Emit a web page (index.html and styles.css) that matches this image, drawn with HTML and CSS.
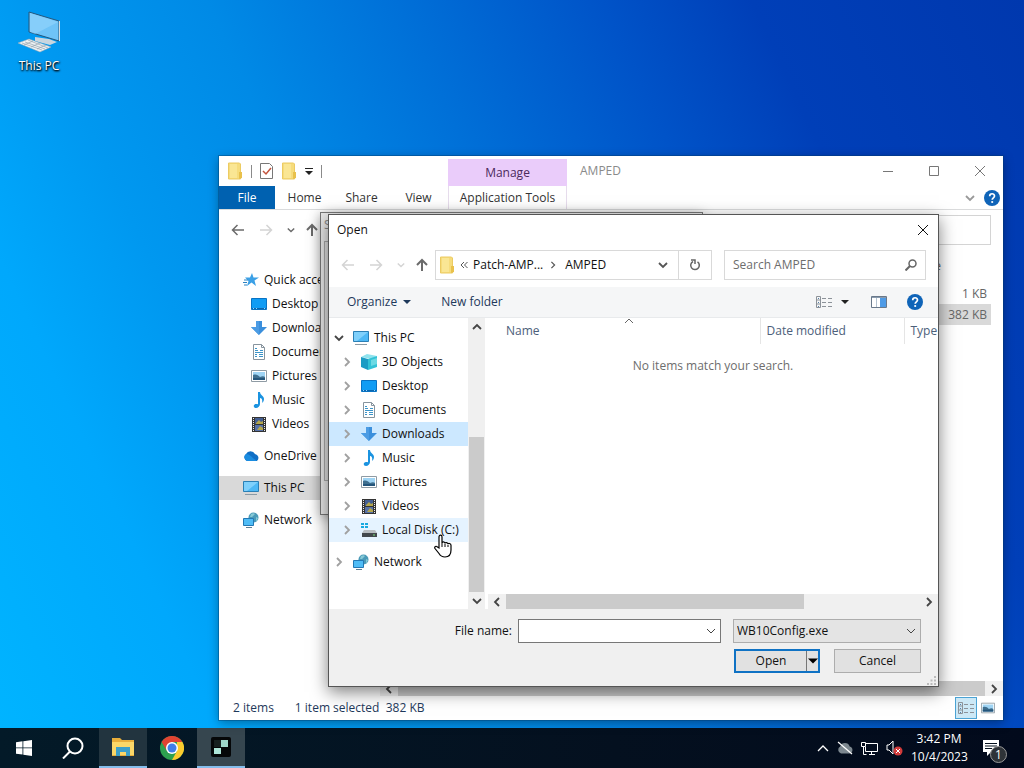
FILE: index.html
```html
<!DOCTYPE html>
<html lang="en">
<head>
    <meta charset="UTF-8">
    <meta name="viewport" content="width=device-width, initial-scale=1.0">
    <title>Desktop</title>
    <link rel="stylesheet" href="styles.css">
</head>
<body>

    <!-- icon set -->
    <svg class="sprite" aria-hidden="true">
        <symbol id="i-folder" viewBox="0 0 16 18">
            <path d="M1.500 1h11l1 1v15h-12z" fill="#f6dc7c" stroke="#eccb62" />
            <path d="M12 10h3v6l-3 1z" fill="#e9c14c" />
            <path d="M3 2h7v14H3z" fill="#fae694" />
        </symbol>
        <symbol id="i-pc" viewBox="0 0 16 16">
            <path d="M.5 1.500h15v10H.5z" fill="#4db8f5" stroke="#2a7fb5" />
            <path d="M1 2h14L4 11H1z" fill="#7fd0fb" />
            <path d="M2 14.500h12" stroke="#8a9aa5" />
        </symbol>
        <symbol id="i-desktop" viewBox="0 0 16 16">
            <path d="M.5 2.500h15v11H.5z" fill="#109cf4" stroke="#0873c4" />
            <path d="M1 12.500h14" stroke="#0a65ad" />
            <path d="M2 12.500h1m2 0h1m7 0h1" stroke="#9ad8ff" />
        </symbol>
        <symbol id="i-down" viewBox="0 0 16 16">
            <path d="M5 1h6v6h5l-8 8-8-8h5z" fill="#3b8fdc" />
            <path d="M5 1h3v14L0 7h5z" fill="#4c9ce4" />
        </symbol>
        <symbol id="i-doc" viewBox="0 0 16 16">
            <path d="M2.500.5h8l3 3v12h-11z" fill="#fff" stroke="#87949e" />
            <path d="M10.500.5v3h3" fill="none" stroke="#87949e" />
            <path d="M4 4.500h2M4 6.500h3M9 6.500h3M4 8.500h8M4 10.500h2M8 10.500h4M4 12.500h2M8 12.500h4" stroke="#3b94c9" />
        </symbol>
        <symbol id="i-pic" viewBox="0 0 16 16">
            <path d="M.5 2.500h15v11H.5z" fill="#fff" stroke="#8f9ba4" />
            <path d="M2 4h12v8H2z" fill="#9fd4f4" />
            <path d="M2 7c3-1 5 0 7 2 2-1 4-1 5 0v3H2z" fill="#3f6f8f" />
            <path d="M2 10h12v2H2z" fill="#24557b" />
        </symbol>
        <symbol id="i-music" viewBox="0 0 16 16">
            <path d="M7 0h2c0 3 4 4 4 7 0 2-1 3-2 4 1-4-1-5-2-5v6c0 2-2 4-4 4-3 0-3-4 0-4 1 0 2 0 2 .5z" fill="#1b93e0" />
        </symbol>
        <symbol id="i-video" viewBox="0 0 16 16">
            <path d="M1 1h14v15H1z" fill="#343434" />
            <path d="M4 2h8v6H4z" fill="#435e93" />
            <path d="M4 9h8v6H4z" fill="#5671a8" />
            <path d="M5 7l3-3 2 2 2-1v3H5zM6 14l3-4 3 2v2z" fill="#b4a64c" />
            <path d="M2.500 2v14M13.500 2v14" stroke="#eee" stroke-dasharray="1 1" />
        </symbol>
        <symbol id="i-cube" viewBox="0 0 16 16">
            <path d="M0 3l6-3 10 2-6 3z" fill="#8fe3ee" />
            <path d="M0 3l7 2v11l-7-3z" fill="#1b9cc4" />
            <path d="M7 5l9-3v11l-9 3z" fill="#33c2d6" />
            <path d="M10 6l6-2v6l-6 2z" fill="#6cd9e3" />
        </symbol>
        <symbol id="i-disk" viewBox="0 0 16 16">
            <path d="M0 1h3v2H0zM4 1h3v2H4zM0 4h3v2H0zM4 4h3v2H4z" fill="#17a9e0" />
            <path d="M3 8h11l2 3H1z" fill="#b9bec2" />
            <path d="M1 11h15v4H1z" fill="#43484c" />
            <path d="M12 13h2" stroke="#7be07b" />
        </symbol>
        <symbol id="i-network" viewBox="0 0 16 16">
            <circle cx="10.500" cy="5.500" r="5" fill="#4a9ab8" />
            <path d="M8 2c2-1 3-1 4 0l-3 3H7zM13 5l2 1-2 4z" fill="#86c9d6" />
            <path d="M.5 6.500h10v7H.5z" fill="#4fbcf6" stroke="#2378b4" />
            <path d="M3 15.500h6" stroke="#5d7f95" />
        </symbol>
        <symbol id="i-star" viewBox="0 0 16 16">
            <path d="M9 1l1.500 4.500H16l-4.500 3L13 14l-4.500-3.500L4 14l1.500-5L2 5.500h5z" fill="#3ba0e6" />
            <path d="M1 8h4M0 10.500h4M1 13h3" stroke="#2b82c2" />
        </symbol>
        <symbol id="i-cloud" viewBox="0 0 16 16">
            <path d="M4 13a4 4 0 0 1-1-7 5 5 0 0 1 9 0 4 4 0 0 1 2 7z" fill="#0f6fc6" />
            <path d="M4 13a4 4 0 0 1-1-7c4 0 6 4 11 7z" fill="#1a8ce0" />
        </symbol>
        <symbol id="i-left" viewBox="0 0 14 12">
            <path d="M13 6H2M6.500 1L1.500 6l5 5" fill="none" stroke="currentColor" stroke-width="1.500" />
        </symbol>
        <symbol id="i-right" viewBox="0 0 14 12">
            <path d="M1 6h11M7.500 1l5 5-5 5" fill="none" stroke="currentColor" stroke-width="1.500" />
        </symbol>
        <symbol id="i-up" viewBox="0 0 14 14">
            <path d="M7 13V2M2 7l5-5 5 5" fill="none" stroke="currentColor" stroke-width="2" />
        </symbol>
        <symbol id="i-chev" viewBox="0 0 10 10">
            <path d="M1 3l4 4 4-4" fill="none" stroke="currentColor" stroke-width="1.800" />
        </symbol>
        <symbol id="i-caret" viewBox="0 0 8 8">
            <path d="M0 2h8L4 6z" fill="currentColor" />
        </symbol>
        <symbol id="i-close" viewBox="0 0 12 12">
            <path d="M1 1l10 10M11 1L1 11" stroke="currentColor" />
        </symbol>
        <symbol id="i-list" viewBox="0 0 18 14">
            <path d="M1.500 1.500h4v11h-4zM1.500 5h4M1.500 9h4" fill="none" stroke="#8c9299" />
            <path d="M3 3.500h1M3 7.500h1M3 11.500h1" stroke="#5580a8" />
            <path d="M7 3.500h4M13 3.500h4M7 7.500h4M13 7.500h4M7 11.500h4M13 11.500h4" stroke="#8c9299" />
        </symbol>
        <symbol id="i-help" viewBox="0 0 16 16">
            <circle cx="8" cy="8" r="8" fill="#0f64b8" />
            <path d="M5.700 6.200C5.700 3 10.500 3 10.500 6c0 1.800-2.300 1.800-2.300 3.700" fill="none" stroke="#fff" stroke-width="1.700" />
            <circle cx="8.200" cy="12" r="1.100" fill="#fff" />
        </symbol>
    </svg>

    <main class="desktop">

        <button class="shortcut">
            <svg width="44" height="42" viewBox="0 0 44 42" aria-hidden="true">
                <path d="M18 26l14 2 8 3-7 3-15-4z" fill="#c9d6df" />
                <path d="M12 1l30 9v20l-30-9z" fill="#6fc3f7" stroke="#24577d" />
                <path d="M13 2l28 9-23 12-5-2z" fill="#96d5fb" opacity=".6" />
                <path d="M42.500 10v20" stroke="#d7dde0" />
                <path d="M1 32l11-4 22 8-11 5z" fill="#eef1f3" stroke="#98a7b1" stroke-width=".5" />
                <path d="M5 32l20 7M8 31l20 7M11 29l20 8M7 34l9-4M14 36l9-4M20 38l9-4" stroke="#96a5af" stroke-width=".7" />
            </svg>
            <span>This PC</span>
        </button>

        <section class="window explorer" aria-label="AMPED">
            <header class="ex-title">
                <div class="quick">
                    <svg width="16" height="18"><use href="#i-folder" /></svg>
                    <i class="sep"></i>
                    <svg width="13" height="16" viewBox="0 0 13 16"><path d="M.5.5h9l3 3v12H.5z" fill="#fff" stroke="#777" /><path d="M3 8l3 3 5-6" fill="none" stroke="#c2543e" stroke-width="1.500" /></svg>
                    <svg width="16" height="18"><use href="#i-folder" /></svg>
                    <svg width="8" height="8" viewBox="0 0 8 8"><path d="M0 1.500h8" stroke="#222" /><path d="M0 4h8L4 8z" fill="#222" /></svg>
                    <i class="sep"></i>
                </div>
                <div class="manage">Manage</div>
                <h1>AMPED</h1>
                <div class="caption">
                    <button aria-label="Minimize"><svg width="12" height="12" viewBox="0 0 12 12"><path d="M1 6.500h10" stroke="currentColor" /></svg></button>
                    <button aria-label="Maximize"><svg width="12" height="12" viewBox="0 0 12 12"><path d="M1.500 1.500h9v9h-9z" fill="none" stroke="currentColor" /></svg></button>
                    <button aria-label="Close"><svg width="12" height="12"><use href="#i-close" /></svg></button>
                </div>
            </header>
            <nav class="ribbon">
                <button class="file">File</button>
                <button>Home</button>
                <button>Share</button>
                <button>View</button>
                <button class="tools">Application Tools</button>
                <span class="ribbon-end">
                    <svg width="10" height="10"><use href="#i-chev" /></svg>
                    <svg class="help" width="16" height="16"><use href="#i-help" /></svg>
                </span>
            </nav>
            <div class="ex-nav">
                <button aria-label="Back"><svg width="14" height="12"><use href="#i-left" /></svg></button>
                <button class="off" aria-label="Forward"><svg width="14" height="12"><use href="#i-right" /></svg></button>
                <button aria-label="Recent"><svg width="8" height="8"><use href="#i-chev" /></svg></button>
                <button class="up" aria-label="Up"><svg width="14" height="14"><use href="#i-up" /></svg></button>
                <input class="ex-search" type="text" aria-label="Search">
            </div>
            <div class="ex-body">
                <ul class="tree">
                    <li><svg><use href="#i-star" /></svg>Quick access</li>
                    <li class="child"><svg><use href="#i-desktop" /></svg>Desktop</li>
                    <li class="child"><svg><use href="#i-down" /></svg>Downloads</li>
                    <li class="child"><svg><use href="#i-doc" /></svg>Documents</li>
                    <li class="child"><svg><use href="#i-pic" /></svg>Pictures</li>
                    <li class="child"><svg><use href="#i-music" /></svg>Music</li>
                    <li class="child"><svg><use href="#i-video" /></svg>Videos</li>
                    <li class="group"><svg><use href="#i-cloud" /></svg>OneDrive</li>
                    <li class="group current"><svg><use href="#i-pc" /></svg>This PC</li>
                    <li class="group"><svg><use href="#i-network" /></svg>Network</li>
                </ul>
                <div class="ex-files">
                    <table>
                        <thead><tr><th>Size</th></tr></thead>
                        <tbody>
                            <tr><td>1 KB</td></tr>
                            <tr class="picked"><td>382 KB</td></tr>
                        </tbody>
                    </table>
                    <div class="hscroll">
                        <svg class="to-left" width="10" height="10"><use href="#i-chev" /></svg>
                        <i class="thumb"></i>
                        <svg class="to-right" width="10" height="10"><use href="#i-chev" /></svg>
                    </div>
                </div>
            </div>
            <footer class="status">
                <span>2 items</span>
                <span>1 item selected&nbsp; 382 KB</span>
                <button class="view on" aria-label="Details"><svg width="18" height="14"><use href="#i-list" /></svg></button>
                <button class="view" aria-label="Thumbnails"><svg width="14" height="14"><use href="#i-pic" /></svg></button>
            </footer>
        </section>

        <section class="window behind" aria-label="Setup">
            <p>S</p>
            <div class="behind-box"></div>
        </section>

        <section class="window dialog" role="dialog" aria-label="Open">
            <header class="dlg-title">
                <h2>Open</h2>
                <button aria-label="Close"><svg width="12" height="12"><use href="#i-close" /></svg></button>
            </header>
            <div class="dlg-nav">
                <div class="arrows">
                    <button class="off" aria-label="Back"><svg width="14" height="12"><use href="#i-left" /></svg></button>
                    <button class="off" aria-label="Forward"><svg width="14" height="12"><use href="#i-right" /></svg></button>
                    <button class="off" aria-label="Recent"><svg width="8" height="8"><use href="#i-chev" /></svg></button>
                    <button class="up" aria-label="Up"><svg width="14" height="14"><use href="#i-up" /></svg></button>
                </div>
                <div class="address">
                    <svg width="16" height="18"><use href="#i-folder" /></svg>
                    <svg class="more" width="8" height="8" viewBox="0 0 8 8"><path d="M4 1L1 4l3 3M7.500 1l-3 3 3 3" fill="none" stroke="#555" /></svg>
                    <button>Patch-AMP...</button>
                    <svg class="crumb to-right" width="8" height="8" viewBox="0 0 10 10"><path d="M1 3l4 4 4-4" fill="none" stroke="#555" stroke-width="1.500" /></svg>
                    <button>AMPED</button>
                    <button class="drop" aria-label="Previous locations"><svg width="10" height="10"><use href="#i-chev" /></svg></button>
                    <button class="refresh" aria-label="Refresh"><svg width="12" height="12" viewBox="0 0 12 12"><path d="M4 2.500a4.300 4.300 0 1 0 4.500.3" fill="none" stroke="#666" stroke-width="1.500" /><path d="M2 1h4v4" fill="none" stroke="#666" stroke-width="1.500" /></svg></button>
                </div>
                <label class="search">
                    <input type="text" placeholder="Search AMPED" aria-label="Search AMPED">
                    <svg width="12" height="12" viewBox="0 0 12 12"><circle cx="7.500" cy="4.500" r="3.500" fill="none" stroke="#666" stroke-width="1.500" /><path d="M5 7l-4.500 4.500" stroke="#666" stroke-width="2" /></svg>
                </label>
            </div>
            <div class="toolbar">
                <button>Organize <svg width="8" height="8"><use href="#i-caret" /></svg></button>
                <button>New folder</button>
                <div class="tools-right">
                    <svg width="18" height="14"><use href="#i-list" /></svg>
                    <svg width="8" height="8"><use href="#i-caret" /></svg>
                    <svg class="pane" width="16" height="12" viewBox="0 0 16 12"><path d="M.5.5h15v11H.5z" fill="#fff" stroke="#69788a" /><path d="M1 1.500h14" stroke="#8a9bad" /><path d="M5.500 2v9" stroke="#b4c2d0" /><path d="M9 2h6v9H9z" fill="#4f9be6" /></svg>
                    <svg width="16" height="16"><use href="#i-help" /></svg>
                </div>
            </div>
            <div class="dlg-body">
                <ul class="tree nested">
                    <li class="open"><svg class="tw"><use href="#i-chev" /></svg><svg><use href="#i-pc" /></svg>This PC</li>
                    <li class="child"><svg class="tw"><use href="#i-chev" /></svg><svg><use href="#i-cube" /></svg>3D Objects</li>
                    <li class="child"><svg class="tw"><use href="#i-chev" /></svg><svg><use href="#i-desktop" /></svg>Desktop</li>
                    <li class="child"><svg class="tw"><use href="#i-chev" /></svg><svg><use href="#i-doc" /></svg>Documents</li>
                    <li class="child chosen"><svg class="tw"><use href="#i-chev" /></svg><svg><use href="#i-down" /></svg>Downloads</li>
                    <li class="child"><svg class="tw"><use href="#i-chev" /></svg><svg><use href="#i-music" /></svg>Music</li>
                    <li class="child"><svg class="tw"><use href="#i-chev" /></svg><svg><use href="#i-pic" /></svg>Pictures</li>
                    <li class="child"><svg class="tw"><use href="#i-chev" /></svg><svg><use href="#i-video" /></svg>Videos</li>
                    <li class="child hover"><svg class="tw"><use href="#i-chev" /></svg><svg><use href="#i-disk" /></svg>Local Disk (C:)</li>
                    <li class="group"><svg class="tw"><use href="#i-chev" /></svg><svg><use href="#i-network" /></svg>Network</li>
                </ul>
                <div class="vscroll">
                    <svg class="to-up" width="10" height="10"><use href="#i-chev" /></svg>
                    <i class="track"></i>
                    <i class="thumb"></i>
                    <svg width="10" height="10"><use href="#i-chev" /></svg>
                </div>
                <div class="files">
                    <table>
                        <thead>
                            <tr>
                                <th class="name">Name<svg width="10" height="6" viewBox="0 0 10 6"><path d="M1 5l4-4 4 4" fill="none" stroke="#666" /></svg></th>
                                <th class="date">Date modified</th>
                                <th>Type</th>
                            </tr>
                        </thead>
                        <tbody><tr><td colspan="3">No items match your search.</td></tr></tbody>
                    </table>
                    <div class="hscroll">
                        <svg class="to-left" width="10" height="10"><use href="#i-chev" /></svg>
                        <i class="thumb"></i>
                        <i class="track"></i>
                        <svg class="to-right" width="10" height="10"><use href="#i-chev" /></svg>
                    </div>
                </div>
            </div>
            <form class="dlg-foot">
                <div class="line">
                    <label for="filename">File name:</label>
                    <span class="combo">
                        <input type="text" id="filename">
                        <svg width="10" height="10" viewBox="0 0 10 10"><path d="M1 3l4 4 4-4" fill="none" stroke="#444" /></svg>
                    </span>
                    <span class="picker">
                        <select aria-label="File type"><option>WB10Config.exe</option></select>
                        <svg width="10" height="10" viewBox="0 0 10 10"><path d="M1 3l4 4 4-4" fill="none" stroke="#444" /></svg>
                    </span>
                </div>
                <div class="line">
                    <span class="split">
                        <button type="button">Open</button>
                        <button type="button" class="arrow" aria-label="Open options"><svg width="10" height="10" viewBox="0 0 8 8"><path d="M0 2h8L4 6z" /></svg></button>
                    </span>
                    <button type="button" class="cancel">Cancel</button>
                </div>
                <svg class="grip" width="9" height="9" viewBox="0 0 9 9"><path d="M7 0h2v2H7zM7 3.500h2v2H7zM7 7h2v2H7zM3.500 3.500h2v2h-2zM3.500 7h2v2h-2zM0 7h2v2H0z" fill="#bbb" /></svg>
            </form>
        </section>

        <svg class="cursor" width="18" height="24" viewBox="0 0 18 24" aria-hidden="true">
            <path d="M5 14V3c0-2.500 3-2.500 3 0v6c0-1.500 3-1.500 3 .5 0-1.500 3-1 3 .7 0-1.200 3-1 3 1V16c0 4-2 7-6 7-3 0-4.500-1-6-3.500L1 14.500c-1-2 1-3 2.500-1.500z" fill="#fff" stroke="#000" stroke-width="1.200" />
            <path d="M8 9v4M11 10v3M14 11v2" stroke="#000" />
        </svg>
    </main>

    <footer class="taskbar">
        <button aria-label="Start"><svg width="16" height="16" viewBox="0 0 16 16"><path d="M0 2.300l6.500-1v6.200H0zM7.300 1.200L16 0v7.500H7.300zM0 8.300h6.500v6.300L0 13.700zM7.300 8.300H16V16l-8.700-1.300z" fill="#fff" /></svg></button>
        <button class="find" aria-label="Search"><svg width="22" height="22" viewBox="0 0 22 22"><circle cx="13" cy="9" r="7.500" fill="none" stroke="#fff" stroke-width="2" /><path d="M8 14.500L1 21.500" stroke="#fff" stroke-width="2" /></svg></button>
        <button class="active" aria-label="File Explorer"><svg width="22" height="18" viewBox="0 0 22 18"><path d="M0 0h8l2 2h12v16H0z" fill="#e9ae3b" /><path d="M0 4h22v13H0z" fill="#fbd768" /><path d="M4 9h14v9h-4v-4H8v4H4z" fill="#3c9fc9" /></svg></button>
        <button aria-label="Chrome"><svg width="24" height="24" viewBox="0 0 24 24"><circle cx="12" cy="12" r="12" fill="#2da14f" /><path d="M1.600 6A12 12 0 0 1 22.400 6H12L7 15z" fill="#df4332" /><path d="M22.400 6A12 12 0 0 1 12 24l5-9V6z" fill="#fccb2e" /><circle cx="12" cy="12" r="6" fill="#fff" /><circle cx="12" cy="12" r="4.500" fill="#3f7ee8" /></svg></button>
        <button class="active current-app" aria-label="AMPED"><svg width="20" height="20" viewBox="0 0 20 20"><rect width="20" height="20" rx="2" fill="#050708" /><path d="M10 3h7v7h-7z" fill="#9fd6c9" /><path d="M3 11h7v6H3z" fill="#aee5d8" /><path d="M3 3h7v7H3z" fill="#17201f" /></svg></button>
        <div class="tray">
            <svg width="12" height="8" viewBox="0 0 12 8"><path d="M1 7l5-5 5 5" fill="none" stroke="#fff" stroke-width="1.300" /></svg>
            <svg width="16" height="14" viewBox="0 0 16 14"><path d="M4 12.500a3.800 3.800 0 0 1-.8-7 5 5 0 0 1 9.500 0 3.600 3.600 0 0 1 0 7z" fill="#7c878f" /><path d="M1 1l14 12" stroke="#fff" stroke-width="1.200" /></svg>
            <svg width="17" height="15" viewBox="0 0 17 15"><path d="M5 2.500h11.500v8H4.500V6M8 13.500h6M10.500 10.500v3M2.500 6v7.500h3" fill="none" stroke="#fff" /><path d="M.5 1.500h4v4h-4z" fill="none" stroke="#fff" /></svg>
            <svg width="17" height="16" viewBox="0 0 17 16"><path d="M1 5h2l4-4v13l-4-4H1z" fill="none" stroke="#fff" /><circle cx="12" cy="11" r="4.500" fill="#d23b3b" /><path d="M10 9l4 4M14 9l-4 4" stroke="#fff" /></svg>
            <time class="clock"><span>3:42 PM</span><span>10/4/2023</span></time>
            <button class="notes" aria-label="Notifications">
                <svg width="16" height="16" viewBox="0 0 16 16"><path d="M0 0h16v12H8l-4 4v-4H0z" fill="#fff" /><path d="M2 3.500h12M2 6h12M2 8.500h7" stroke="#06121f" /></svg>
                <span class="badge">1</span>
            </button>
        </div>
    </footer>

</body>
</html>
```
FILE: styles.css
```css
* {
    box-sizing: border-box;
}
body {
    margin: 0;
    height: 100vh;
    display: flex;
    flex-direction: column;
    overflow: hidden;
    font-family: "Open Sans", "Noto Sans", sans-serif;
    font-size: 12px;
    line-height: 16px;
    color: #111;
}
button, input, select {
    font: inherit;
    color: inherit;
    margin: 0;
    padding: 0;
    border: none;
    border-radius: 0;
    background: none;
    outline: none;
}
button {
    display: flex;
    align-items: center;
    justify-content: center;
}
h1, h2, p, ul {
    margin: 0;
    padding: 0;
    font-size: 12px;
    font-weight: normal;
    list-style: none;
}
svg {
    flex: none;
    display: block;
}
.sprite {
    position: absolute;
    width: 0;
    height: 0;
}
.to-left {
    transform: rotate(90deg);
}
.to-right {
    transform: rotate(-90deg);
}
.to-up {
    transform: rotate(180deg);
}

/* desktop */
.desktop {
    flex: 1;
    position: relative;
    background: linear-gradient(65deg, #00b4ff 0%, #00a8fc 16%, #0098f0 27%, #008ae6 40%, #0070d8 54%, #0053c8 69%, #003fb8 80%, #0038ae 100%);
}
.shortcut {
    position: absolute;
    left: 2px;
    top: 11px;
    width: 74px;
    flex-direction: column;
    gap: 5px;
    color: #fff;
    text-shadow: 0 1px 2px #000, 1px 1px 2px #000;
}
.window {
    position: absolute;
    display: flex;
    flex-direction: column;
    background: #fff;
}

/* explorer window */
.explorer {
    inset: 156px 21px 8px 219px;
    box-shadow: 0 0 0 1px rgba(0, 60, 110, 0.4), 0 3px 10px rgba(0, 0, 0, 0.35);
}
.ex-title {
    display: flex;
    height: 30px;
}
.quick {
    width: 229px;
    padding-left: 8px;
    display: flex;
    align-items: center;
    gap: 8px;
}
.sep {
    width: 1px;
    height: 13px;
    background: #8a8a8a;
}
.manage {
    width: 119px;
    margin-top: 3px;
    line-height: 27px;
    text-align: center;
    background: #eaccfa;
    color: #4b2a5c;
}
.ex-title h1 {
    padding-left: 13px;
    line-height: 30px;
    color: #8a8a8a;
}
.caption {
    margin-left: auto;
    display: flex;
    color: #777;
}
.caption button {
    width: 46px;
}
.ribbon {
    display: flex;
    height: 24px;
    border-bottom: 1px solid #dadbdc;
    color: #333;
}
.ribbon button {
    width: 57px;
}
.ribbon .file {
    width: 56px;
    background: #0061b0;
    color: #fff;
}
.ribbon .file + button {
    margin-left: 1px;
}
.ribbon .tools {
    width: 119px;
    margin-left: 1px;
    border: solid #e6dcec;
    border-width: 0 1px;
}
.ribbon-end {
    margin-left: auto;
    padding-right: 3px;
    display: flex;
    align-items: center;
    gap: 9px;
    color: #999;
}
.ex-nav {
    display: flex;
    align-items: center;
    gap: 14px;
    height: 40px;
    padding: 0 12px;
    color: #6b6b6b;
}
.off {
    color: #d4d4d4;
}
.up {
    margin-left: -4px;
}
.ex-search {
    margin-left: auto;
    height: 30px;
    width: 190px;
    border: 1px solid #d4d4d4;
}
.ex-body {
    flex: 1;
    display: flex;
    min-height: 0;
}
.tree {
    width: 161px;
    padding-top: 18px;
}
.tree li {
    display: flex;
    align-items: center;
    gap: 5px;
    height: 24px;
    padding-left: 24px;
    white-space: nowrap;
}
.tree li svg {
    width: 16px;
    height: 16px;
}
.tree .child {
    padding-left: 32px;
}
.tree .group {
    margin-top: 8px;
}
.tree .current {
    background: #d9d9d9;
}
.ex-files {
    flex: 1;
    display: flex;
    flex-direction: column;
}
.ex-files table {
    margin-left: auto;
    margin-right: 12px;
    width: 80px;
    border-collapse: collapse;
    color: #666;
}
.ex-files th {
    height: 33px;
    padding: 0 0 2px 8px;
    text-align: left;
    font-weight: normal;
}
.ex-files td {
    height: 21px;
    padding: 0 4px;
    text-align: right;
}
.ex-files .picked {
    background: #d9d9d9;
}
.hscroll {
    margin-top: auto;
    height: 15px;
    display: flex;
    align-items: center;
    background: #f0f0f0;
    color: #444;
    padding: 0 4px;
    gap: 4px;
}
.hscroll .thumb {
    flex: 2;
    height: 15px;
    background: #cbcbcb;
}
.status {
    display: flex;
    align-items: center;
    height: 24px;
    padding: 0 4px 0 14px;
    color: #1e395b;
}
.status span {
    margin-right: 21px;
}
.view {
    width: 22px;
    height: 22px;
    border: 1px solid transparent;
}
.view.on {
    margin-left: auto;
    background: #cce8f6;
    border-color: #4ba3d4;
}

/* window between the two */
.behind {
    left: 320px;
    top: 212px;
    width: 383px;
    height: 303px;
    background: #e8e8e8;
    border: 1px solid #777;
    padding: 4px 3px;
    color: #888;
    box-shadow: 0 3px 12px rgba(0, 0, 0, 0.35);
}
.behind-box {
    margin-top: 8px;
    height: 240px;
    border: 1px solid #aaa;
    background: #e2e2e2;
}

/* open dialog */
.dialog {
    inset: 214px 85px 41px 328px;
    border: 1px solid #555;
    box-shadow: 0 5px 16px rgba(0, 0, 0, 0.5);
}
.dlg-title {
    display: flex;
    align-items: center;
    justify-content: space-between;
    height: 30px;
    padding: 0 9px 0 8px;
}
.dlg-nav {
    display: flex;
    align-items: center;
    height: 40px;
    padding: 0 12px;
    margin-bottom: 2px;
}
.arrows {
    width: 94px;
    display: flex;
    align-items: center;
    gap: 14px;
    color: #6b6b6b;
}
.address {
    flex: 1;
    display: flex;
    align-items: center;
    height: 30px;
    margin-right: 12px;
    padding-left: 3px;
    gap: 5px;
    border: 1px solid #d9d9d9;
}
.crumb {
    margin: 0 3px 0 1px;
}
.drop {
    width: 20px;
    margin-left: auto;
    color: #555;
}
.refresh {
    width: 33px;
    height: 28px;
    border-left: 1px solid #d9d9d9;
}
.search {
    width: 202px;
    height: 30px;
    display: flex;
    align-items: center;
    padding: 0 8px;
    border: 1px solid #d9d9d9;
}
.search input {
    flex: 1;
    min-width: 0;
}
.search input::placeholder {
    color: #6d6d6d;
    opacity: 1;
}
.toolbar {
    display: flex;
    align-items: center;
    height: 31px;
    padding: 0 15px 0 18px;
    gap: 30px;
    background: #f5f6f7;
    border-bottom: 1px solid #e8eaec;
    color: #1e395b;
}
.toolbar button {
    gap: 6px;
}
.tools-right {
    margin-left: auto;
    display: flex;
    align-items: center;
    gap: 8px;
    color: #222;
}
.tools-right .pane {
    margin: 0 12px 0 14px;
}
.dlg-body {
    flex: 1;
    min-height: 0;
    display: flex;
}
.nested {
    width: 139px;
    padding-top: 8px;
}
.nested li {
    padding-left: 5px;
}
.nested .child {
    padding-left: 13px;
}
.tree .tw {
    width: 10px;
    height: 10px;
    margin-right: 4px;
    transform: rotate(-90deg);
    color: #a0a0a0;
}
.nested .open .tw {
    transform: none;
    color: #444;
}
.nested .chosen {
    background: #cce8ff;
}
.nested .hover {
    background: #e5f3ff;
}
.vscroll {
    width: 17px;
    display: flex;
    flex-direction: column;
    align-items: center;
    padding: 4px 1px 3px;
    gap: 4px;
    background: #f0f0f0;
    color: #444;
}
.vscroll .track {
    flex: 5;
}
.vscroll .thumb {
    flex: 8;
    width: 15px;
    background: #cbcbcb;
}
.files {
    flex: 1;
    min-width: 0;
    margin-left: 3px;
    display: flex;
    flex-direction: column;
}
.files table {
    width: 100%;
    table-layout: fixed;
    border-collapse: collapse;
}
.files th {
    position: relative;
    height: 26px;
    padding: 0 6px;
    text-align: left;
    font-weight: normal;
    color: #4c607a;
    border-right: 1px solid #e5e5e5;
}
.files th:last-child {
    border: none;
}
.files .name {
    width: 272px;
    padding-left: 18px;
}
.files .date {
    width: 144px;
}
.files th svg {
    position: absolute;
    top: 0;
    left: 50%;
}
.files td {
    padding: 14px 0 0;
    text-align: center;
    color: #6d6d6d;
}
.files .track {
    flex: 3;
}
.files .hscroll .thumb {
    flex: 8;
}
.dlg-foot {
    position: relative;
    height: 77px;
    padding: 10px 17px 0 0;
    background: #f0f0f0;
    display: flex;
    flex-direction: column;
    gap: 6px;
}
.line {
    display: flex;
    justify-content: flex-end;
    align-items: center;
}
.combo, .picker {
    display: flex;
    align-items: center;
    height: 24px;
}
.combo {
    width: 203px;
    margin: 0 12px 0 6px;
    padding-right: 4px;
    background: #fff;
    border: 1px solid #777;
}
.combo input {
    flex: 1;
    min-width: 0;
}
.picker {
    width: 188px;
    padding-right: 4px;
    background: #e4e4e4;
    border: 1px solid #adadad;
}
.picker select {
    flex: 1;
    appearance: none;
    padding-left: 3px;
}
.split {
    display: flex;
    width: 86px;
    height: 24px;
    margin-right: 14px;
    background: #e1e1e1;
    border: 2px solid #0f72c4;
}
.split button {
    flex: 1;
}
.split .arrow {
    flex: none;
    width: 12px;
    border-left: 1px solid #777;
}
.cancel {
    width: 87px;
    height: 24px;
    background: #e1e1e1;
    border: 1px solid #adadad;
}
.grip {
    position: absolute;
    right: 2px;
    bottom: 1px;
}
.cursor {
    position: absolute;
    left: 434px;
    top: 534px;
}

/* taskbar */
.taskbar {
    display: flex;
    height: 40px;
    background: linear-gradient(90deg, #031a28, #04101f 60%, #020a1c);
    color: #fff;
}
.taskbar > button {
    width: 48px;
    margin-right: 1px;
}
.taskbar .find {
    width: 49px;
    padding-right: 2px;
}
.taskbar .active {
    background: #22343f;
    border-bottom: 2px solid #84bdec;
}
.taskbar .current-app {
    background: #36464f;
}
.tray {
    margin-left: auto;
    display: flex;
    align-items: center;
    gap: 8px;
    padding-right: 17px;
}
.clock {
    display: flex;
    flex-direction: column;
    width: 56px;
    line-height: 18px;
    text-align: center;
}
.notes {
    position: relative;
    width: 24px;
    margin-left: 8px;
    justify-content: flex-start;
}
.badge {
    position: absolute;
    top: 6px;
    left: 7px;
    width: 17px;
    height: 17px;
    border: 1px solid #999;
    border-radius: 50%;
    background: #2e3338;
    line-height: 15px;
}
```
